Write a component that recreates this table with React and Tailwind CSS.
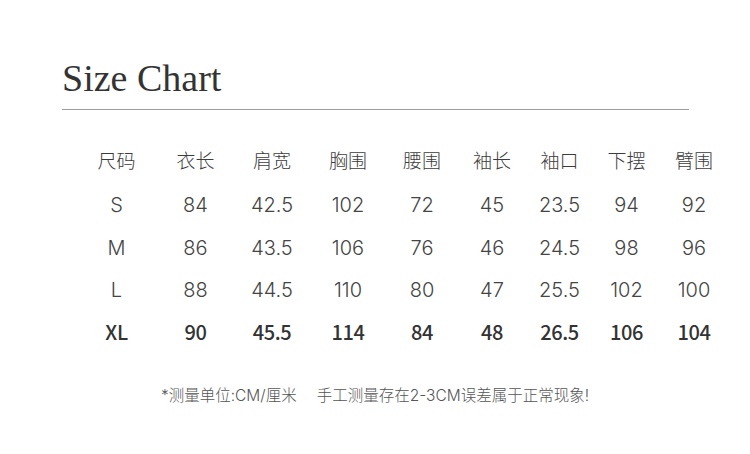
const headers = ["尺码", "衣长", "肩宽", "胸围", "腰围", "袖长", "袖口", "下摆", "臂围"];
const rows = [
  ["S", "84", "42.5", "102", "72", "45", "23.5", "94", "92"],
  ["M", "86", "43.5", "106", "76", "46", "24.5", "98", "96"],
  ["L", "88", "44.5", "110", "80", "47", "25.5", "102", "100"],
];
const xl = ["XL", "90", "45.5", "114", "84", "48", "26.5", "106", "104"];
const rowH = ["h-[43px]", "h-[43px]", "h-[42px]"];

export default function App() {
  return (
    <div className="w-[750px] h-[454px] bg-white overflow-hidden">
      <div className="pt-[56px] pl-[62px]">
        <h1 className="text-[38px] leading-[44px] text-[#333333] font-['Liberation_Serif',serif] font-normal">
          Size Chart
        </h1>
      </div>
      <div className="ml-[62px] mt-[9px] w-[627px] h-px bg-[#9c9c9c]" />
      <div className="ml-[76px] mt-[28px] grid grid-cols-[81px_77px_76px_76px_72px_68px_67px_67px_68px] text-[#444444]">
        {headers.map((h) => (
          <div key={h} className="h-[45px] flex items-center justify-center text-[19px] font-light font-['Noto_Sans_CJK_SC',sans-serif] text-[#3c3c3c]">
            {h}
          </div>
        ))}
        {rows.map((r, i) =>
          r.map((c, j) => (
            <div key={i + "-" + j} className={`${rowH[i]} flex items-center justify-center text-[20px] font-light font-['Inter',sans-serif]`}>
              {c}
            </div>
          ))
        )}
        {xl.map((c, j) => (
          <div key={"xl" + j} className="h-[41px] flex items-center justify-center text-[20px] font-medium tracking-[-0.02em] text-[#333333] font-['Noto_Sans_CJK_SC',sans-serif]">
            {c}
          </div>
        ))}
      </div>
      <div className="mt-[34px] text-center text-[15.5px] leading-[20px] text-[#555555] font-['Inter','Noto_Sans_CJK_SC',sans-serif] font-light">
        <span>*测量单位:CM/厘米</span>
        <span className="ml-[20px]">手工测量存在2-3CM误差属于正常现象!</span>
      </div>
    </div>
  );
}
